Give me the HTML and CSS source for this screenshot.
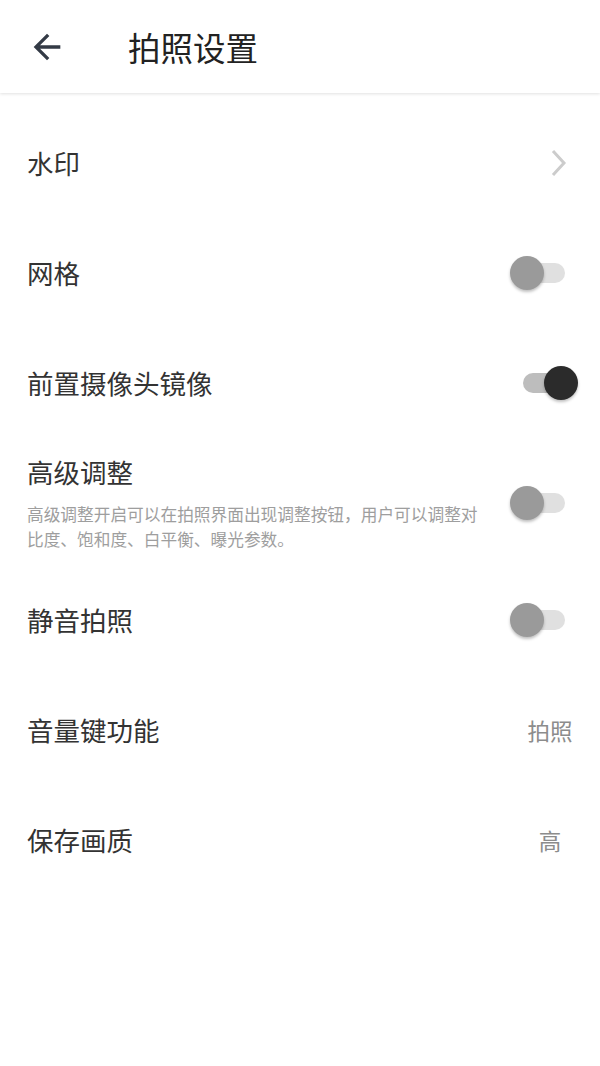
FILE: index.html
```html
<!DOCTYPE html>
<html lang="zh-CN">
<head>
    <meta charset="UTF-8">
    <meta name="viewport" content="width=device-width, initial-scale=1.0">
    <title>拍照设置</title>
    <link rel="stylesheet" href="styles.css">
</head>
<body>

    <!-- Barra superior -->
    <header class="topbar">
        <span class="back">
            <svg width="40" height="40" viewBox="0 0 24 24"><path d="M20 11H7.83l5.59-5.59L12 4l-8 8 8 8 1.41-1.41L7.83 13H20v-2z" fill="#333a45"/></svg>
        </span>
        <h1 class="title">拍照设置</h1>
    </header>

    <!-- Lista de ajustes -->
    <main class="list">
        <div class="row">
            <span class="label">水印</span>
            <svg class="chevron" width="18" height="28" viewBox="0 0 18 28"><polyline points="3,2 14,14 3,26" fill="none" stroke="#cccccc" stroke-width="3"/></svg>
        </div>

        <div class="row">
            <span class="label">网格</span>
            <span class="switch"><span class="thumb"></span></span>
        </div>

        <div class="row">
            <span class="label">前置摄像头镜像</span>
            <span class="switch on"><span class="thumb"></span></span>
        </div>

        <div class="row row-desc">
            <div class="text">
                <div class="label">高级调整</div>
                <p class="desc">高级调整开启可以在拍照界面出现调整按钮，用户可以调整对比度、饱和度、白平衡、曝光参数。</p>
            </div>
            <span class="switch"><span class="thumb"></span></span>
        </div>

        <div class="row">
            <span class="label">静音拍照</span>
            <span class="switch"><span class="thumb"></span></span>
        </div>

        <div class="row">
            <span class="label">音量键功能</span>
            <span class="value">拍照</span>
        </div>

        <div class="row">
            <span class="label">保存画质</span>
            <span class="value">高</span>
        </div>
    </main>

</body>
</html>
```

FILE: styles.css
```css
/* Estilos generales */
body {
    margin: 0;
    font-family: "Noto Sans CJK SC", "Noto Sans", sans-serif;
    background-color: #fff;
    color: #333;
}

/* Barra superior */
.topbar {
    display: flex;
    align-items: center;
    height: 93px;
    background-color: #fff;
    box-shadow: 0 1px 3px rgba(0, 0, 0, 0.12);
    position: relative;
}
.back {
    display: flex;
    margin-left: 27px;
    width: 40px;
    height: 40px;
}
.title {
    margin: 0 0 0 61px;
    font-size: 32.5px;
    font-weight: normal;
    line-height: 40px;
    color: #222;
}

/* Lista */
.list {
    padding-top: 15px;
}
.row {
    display: flex;
    align-items: center;
    justify-content: space-between;
    min-height: 110px;
    padding-left: 27px;
    box-sizing: border-box;
}
.label {
    font-size: 26.5px;
    line-height: 36px;
}
.chevron {
    margin-right: 32px;
}
.value {
    width: 56px;
    margin-right: 22px;
    text-align: center;
    font-size: 22.5px;
    color: #8c8c8c;
}

/* Fila con descripción */
.row-desc {
    min-height: 0;
    padding-top: 16px;
    padding-bottom: 13px;
}
.desc {
    margin: 12px 0 0;
    width: 460px;
    font-size: 16.7px;
    line-height: 25px;
    color: #9e9e9e;
}

/* Interruptor */
.switch {
    position: relative;
    width: 48px;
    height: 20px;
    margin-right: 35px;
    border-radius: 10px;
    background-color: #e0e0e0;
    flex-shrink: 0;
}
.thumb {
    position: absolute;
    top: -7px;
    left: -7px;
    width: 34px;
    height: 34px;
    border-radius: 50%;
    background-color: #9a9a9a;
    box-shadow: 0 2px 3px rgba(0, 0, 0, 0.25);
}
.switch.on {
    margin-right: 29px;
    background-color: #bdbdbd;
}
.switch.on .thumb {
    left: 21px;
    background-color: #2b2b2b;
}
```
